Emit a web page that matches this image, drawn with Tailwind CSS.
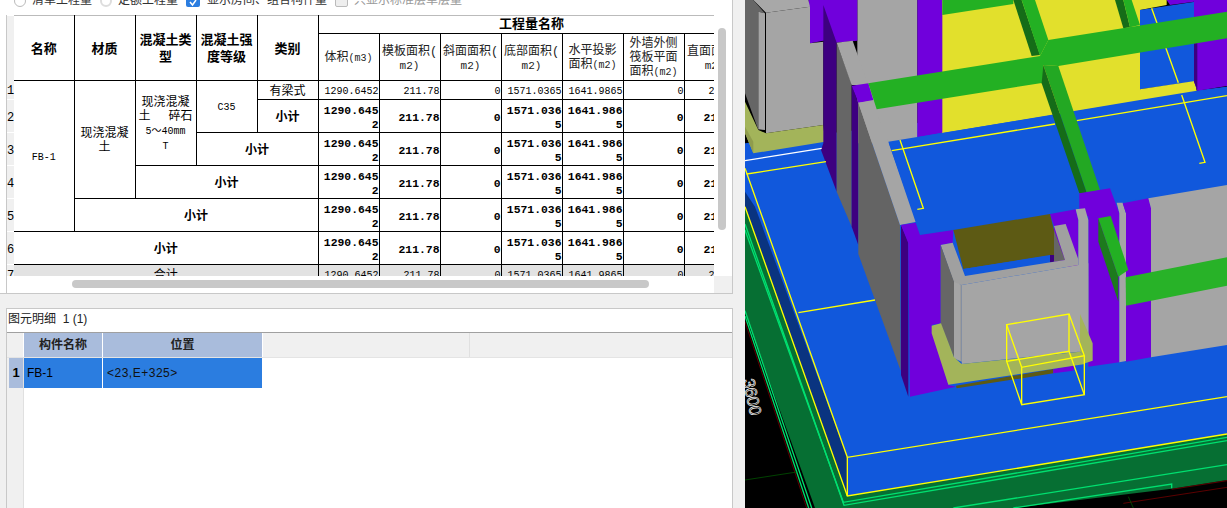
<!DOCTYPE html>
<html lang="zh-CN">
<head>
    <meta charset="UTF-8">
    <title>工程量</title>
    <script src="https://cdn.jsdelivr.net/npm/@tailwindcss/browser@4"></script>
</head>
<body class="bg-[#f0f0f0]">
    <div class="flex w-[1227px] h-[508px] overflow-hidden font-['Liberation_Sans','Noto_Sans_CJK_SC',sans-serif] text-xs text-black">
        <!-- left column: quantity table and detail grid -->
        <div class="w-[745px] shrink-0 flex flex-col">
            <div class="w-[733px] h-[294px] shrink-0 bg-white border-r border-b border-[#c8c8c8] flex flex-col overflow-hidden">
                <div class="h-[15px] shrink-0 flex items-end pb-[8px] text-[12px] leading-[14px] text-[#333]">
                    <span class="ml-[14px] w-[12px] h-[12px] rounded-full border border-[#bbb] bg-white shrink-0"></span>
                    <span class="ml-[6px] shrink-0">清单工程量</span>
                    <span class="ml-[8px] w-[12px] h-[12px] rounded-full border-2 border-[#ddd] bg-white shrink-0"></span>
                    <span class="ml-[6px] shrink-0">定额工程量</span>
                    <span class="ml-[8px] w-[14px] h-[13px] rounded-[2px] bg-[#2b7de0] shrink-0 flex items-end justify-center">
                        <svg width="8" height="8" viewBox="0 0 8 8" fill="none" stroke="#fff" stroke-width="1.5"><path d="M1 3l2.5 3L7 1"/></svg>
                    </span>
                    <span class="ml-[7px] shrink-0">显示房间、组合构件量</span>
                    <span class="ml-[8px] w-[13px] h-[13px] rounded-[2px] border border-[#bbb] bg-[#eee] shrink-0"></span>
                    <span class="ml-[6px] shrink-0 text-[#999]">只显示标准层单层量</span>
                </div>
                <div class="flex h-[261px] shrink-0">
                    <div class="w-[7px] shrink-0 border-r border-[#c8c8c8]"></div>
                    <div class="w-[707px] shrink-0 overflow-hidden">
                        <table class="table-fixed border-collapse w-[738px] font-['Liberation_Mono','Noto_Sans_CJK_SC',monospace] text-[10px] leading-[14px] [&_td]:border [&_td]:border-black [&_td]:p-0">
                            <colgroup>
                                <col class="w-[7px]"><col class="w-[60px]"><col class="w-[61px]"><col class="w-[61px]"><col class="w-[61px]"><col class="w-[61px]"><col class="w-[61px]"><col class="w-[61px]"><col class="w-[61px]"><col class="w-[61px]"><col class="w-[61px]"><col class="w-[61px]"><col class="w-[61px]">
                            </colgroup>
                            <tr class="h-[18px]">
                                <th rowspan="2" class="bg-[#f0f0f0]"></th>
                                <td rowspan="2" class="border-t-[#bbb]! border-l-0! text-center font-bold text-[13px] leading-[17px] pt-[2px]!">名称</td>
                                <td rowspan="2" class="border-t-[#bbb]! text-center font-bold text-[13px] leading-[17px] pt-[2px]!">材质</td>
                                <td rowspan="2" class="border-t-[#bbb]! text-center font-bold text-[13px] leading-[17px] pt-[2px]!">混凝土类<br>型</td>
                                <td rowspan="2" class="border-t-[#bbb]! text-center font-bold text-[13px] leading-[17px] pt-[2px]!">混凝土强<br>度等级</td>
                                <td rowspan="2" class="border-t-[#bbb]! text-center font-bold text-[13px] leading-[17px] pt-[2px]!">类别</td>
                                <td colspan="7" class="border-t-[#bbb]! text-center font-bold text-[13px] pt-[1px]!">工程量名称</td>
                            </tr>
                            <tr class="h-[47px] text-center text-[12px] text-[#222] [&>td]:pt-[3px]!">
                                <td>体积<span class="text-[10px]">(m3)</span></td>
                                <td>模板面积(<br><span class="text-[11px]">m2)</span></td>
                                <td>斜面面积(<br><span class="text-[11px]">m2)</span></td>
                                <td>底部面积(<br><span class="text-[11px]">m2)</span></td>
                                <td>水平投影<br>面积<span class="text-[10px]">(m2)</span></td>
                                <td>外墙外侧<br>筏板平面<br>面积<span class="text-[10px]">(m2)</span></td>
                                <td>直面面积(<br><span class="text-[11px]">m2)</span></td>
                            </tr>
                            <tr class="h-[19px] text-right [&>td]:pt-[3px]!">
                                <th class="bg-[#f0f0f0] font-normal text-[12px] text-left border-b border-white pt-[3px]">1</th>
                                <td rowspan="5" class="border-l-0! text-center">FB-1</td>
                                <td rowspan="4" class="text-center text-[12px]">现浇混凝<br>土</td>
                                <td rowspan="3" class="text-center text-[12px]">现浇混凝<br><span class="flex justify-between px-[3px]"><span>土</span><span>碎石</span></span><span class="text-[10px]">5～40mm</span><br><span class="text-[10px]">T</span></td>
                                <td rowspan="2" class="text-center">C35</td>
                                <td class="text-center text-[12px]">有梁式</td>
                                <td class="pr-[1px]">1290.6452</td><td class="pr-[2px]">211.78</td><td class="pr-[2px]">0</td><td class="pr-[1px]">1571.0365</td><td class="pr-[1px]">1641.9865</td><td class="pr-[2px]">0</td><td class="pr-[2px]">211.78</td>
                            </tr>
                            <tr class="h-[33px] text-right font-bold text-[11.4px] break-all [&>td]:pt-[4px]!">
                                <th class="bg-[#f0f0f0] font-normal text-[12px] text-left border-b border-white pt-[3px]">2</th>
                                <td class="text-center text-[12px]">小计</td>
                                <td class="pr-[1px]">1290.6452</td><td class="pr-[2px]">211.78</td><td class="pr-[2px]">0</td><td class="pr-[1px]">1571.0365</td><td class="pr-[1px]">1641.9865</td><td class="pr-[2px]">0</td><td class="pr-[2px]">211.78</td>
                            </tr>
                            <tr class="h-[33px] text-right font-bold text-[11.4px] break-all [&>td]:pt-[4px]!">
                                <th class="bg-[#f0f0f0] font-normal text-[12px] text-left border-b border-white pt-[3px]">3</th>
                                <td colspan="2" class="text-center text-[12px]">小计</td>
                                <td class="pr-[1px]">1290.6452</td><td class="pr-[2px]">211.78</td><td class="pr-[2px]">0</td><td class="pr-[1px]">1571.0365</td><td class="pr-[1px]">1641.9865</td><td class="pr-[2px]">0</td><td class="pr-[2px]">211.78</td>
                            </tr>
                            <tr class="h-[33px] text-right font-bold text-[11.4px] break-all [&>td]:pt-[4px]!">
                                <th class="bg-[#f0f0f0] font-normal text-[12px] text-left border-b border-white pt-[3px]">4</th>
                                <td colspan="3" class="text-center text-[12px]">小计</td>
                                <td class="pr-[1px]">1290.6452</td><td class="pr-[2px]">211.78</td><td class="pr-[2px]">0</td><td class="pr-[1px]">1571.0365</td><td class="pr-[1px]">1641.9865</td><td class="pr-[2px]">0</td><td class="pr-[2px]">211.78</td>
                            </tr>
                            <tr class="h-[33px] text-right font-bold text-[11.4px] break-all [&>td]:pt-[4px]!">
                                <th class="bg-[#f0f0f0] font-normal text-[12px] text-left border-b border-white pt-[3px]">5</th>
                                <td colspan="4" class="text-center text-[12px]">小计</td>
                                <td class="pr-[1px]">1290.6452</td><td class="pr-[2px]">211.78</td><td class="pr-[2px]">0</td><td class="pr-[1px]">1571.0365</td><td class="pr-[1px]">1641.9865</td><td class="pr-[2px]">0</td><td class="pr-[2px]">211.78</td>
                            </tr>
                            <tr class="h-[33px] text-right font-bold text-[11.4px] break-all [&>td]:pt-[4px]!">
                                <th class="bg-[#f0f0f0] font-normal text-[12px] text-left border-b border-white pt-[3px]">6</th>
                                <td colspan="5" class="border-l-0! text-center text-[12px]">小计</td>
                                <td class="pr-[1px]">1290.6452</td><td class="pr-[2px]">211.78</td><td class="pr-[2px]">0</td><td class="pr-[1px]">1571.0365</td><td class="pr-[1px]">1641.9865</td><td class="pr-[2px]">0</td><td class="pr-[2px]">211.78</td>
                            </tr>
                            <tr class="h-[19px] text-right bg-[#e2e2e2] [&>td]:pt-[3px]!">
                                <th class="bg-[#f0f0f0] font-normal text-[12px] text-left pt-[3px]">7</th>
                                <td colspan="5" class="border-l-0! text-center text-[12px]">合计</td>
                                <td class="pr-[1px]">1290.6452</td><td class="pr-[2px]">211.78</td><td class="pr-[2px]">0</td><td class="pr-[1px]">1571.0365</td><td class="pr-[1px]">1641.9865</td><td class="pr-[2px]">0</td><td class="pr-[2px]">211.78</td>
                            </tr>
                        </table>
                    </div>
                    <div class="flex-1">
                        <div class="ml-[4px] mt-[13px] w-[8px] h-[202px] rounded-full bg-[#c8c8c8]"></div>
                    </div>
                </div>
                <div class="flex flex-1">
                    <div class="w-[7px] shrink-0 border-r border-[#c8c8c8]"></div>
                    <div class="w-[707px] shrink-0 pl-[65px] pt-[4px]">
                        <div class="w-[577px] h-[8px] rounded-full bg-[#c8c8c8]"></div>
                    </div>
                    <div class="flex-1 bg-[#f0f0f0]"></div>
                </div>
            </div>
            <!-- detail grid -->
            <div class="mt-[14px] ml-[6px] w-[727px] flex-1 bg-white border-t border-l border-r border-[#c8c8c8] flex flex-col min-h-0">
                <div class="h-[23px] shrink-0 flex items-center pl-[1px] pb-[3px] text-[12px] text-[#222] whitespace-pre">图元明细  1 (1)</div>
                <div class="flex-1 border-t border-[#a0a0a0] flex flex-col min-h-0">
                    <div class="h-[25px] shrink-0 flex bg-[#f0f0f0] border-b border-[#e4e4e4] font-bold text-[#222]">
                        <div class="w-[17px] shrink-0 border-r border-white"></div>
                        <div class="w-[79px] shrink-0 bg-[#a9bcdc] border-r border-white flex items-center justify-center">构件名称</div>
                        <div class="w-[160px] shrink-0 bg-[#a9bcdc] border-r border-white flex items-center justify-center">位置</div>
                        <div class="w-[207px] shrink-0 border-r border-[#e0e0e0]"></div>
                    </div>
                    <div class="flex flex-1 min-h-0">
                        <div class="w-[17px] shrink-0 bg-[#f0f0f0] border-r border-[#e0e0e0]">
                            <div class="h-[30px] ml-[2px] bg-[#a9bcdc] flex items-center justify-center font-bold text-[13px]">1</div>
                        </div>
                        <div class="w-[79px] h-[30px] shrink-0 bg-[#2b7de0] border-r border-white flex items-center pl-[3px]">FB-1</div>
                        <div class="w-[160px] h-[30px] shrink-0 bg-[#2b7de0] border-r border-white flex items-center pl-[4px] text-[#111] tracking-[0.5px]">&lt;23,E+325&gt;</div>
                    </div>
                </div>
            </div>
        </div>
        <!-- 3D model view, drawn in a 3x coordinate space -->
        <div class="w-[482px] h-[508px] shrink-0 bg-black">
            <svg class="block" width="482" height="508" viewBox="15 0 1446 1524" stroke-linejoin="miter">
                <!-- ground slab -->
                <polygon points="15,620 15,940 225,1524 820,1524 1295,1466 1461,1440 1461,1250 322,1400" fill="#066f33"/>
                <polygon points="15,430 1461,260 1461,1302 322,1488 15,620" fill="#1158dc"/>
                <polygon points="15,575 45,620 322,1372 322,1488 15,620" fill="#0a3480"/>
                <g fill="none" stroke="#00e070" stroke-width="4">
                    <polyline points="15,690 310,1507 1461,1312"/>
                    <polyline points="15,672 312,1516 1461,1322"/>
                    <polyline points="15,932 215,1524"/>
                    <polyline points="15,948 206,1524"/>
                    <polyline points="640,1524 1461,1394"/>
                    <polyline points="820,1524 1295,1452 1295,1465"/>
                </g>
                <g fill="none" stroke-width="2">
                    <polyline points="15,965 200,1524" stroke="#8a0000"/>
                    <polyline points="1295,1468 1461,1442" stroke="#8a0000"/>
                    <polyline points="1150,1510 1461,1462" stroke="#8a0000"/>
                    <polyline points="15,1440 170,1416" stroke="#006400"/>
                    <polyline points="1165,1490 1180,1524" stroke="#006400"/>
                </g>
                <text transform="translate(8,1140) rotate(78)" font-family="Liberation Sans" font-size="50" fill="none" stroke="#fff" stroke-width="2">3600</text>
                <!-- back floor and walls -->
                <polygon points="605,0 1280,0 1280,15 1200,30 1200,300 605,400" fill="#e2e02c"/>
                <polygon points="1200,30 1365,5 1365,245 1200,268" fill="#1158dc"/>
                <polygon points="1200,268 1365,243 1370,272 1200,300" fill="#e2e02c"/>
                <polygon points="1280,0 1461,0 1461,258 1372,272 1362,245 1362,5 1290,15" fill="#7000dc"/>
                <polygon points="1362,130 1372,130 1372,270 1362,245" fill="#3d0080"/>
                <polygon points="352,0 532,0 532,430 352,430" fill="#a5a5a5"/>
                <polygon points="532,0 607,0 607,398 532,412" fill="#7000dc"/>
                <polygon points="607,0 820,0 820,12 607,45" fill="#23b023"/>
                <!-- left block -->
                <polygon points="205,0 352,0 352,122 290,128 250,122 210,130" fill="#7000dc"/>
                <polygon points="40,0 205,0 210,20 78,38" fill="#a8a8a8"/>
                <polygon points="78,38 210,20 210,130 250,125 250,375 78,400" fill="#a5a5a5"/>
                <polygon points="15,0 40,0 75,40 55,35 55,390 15,280" fill="#666666"/>
                <polygon points="55,35 75,40 75,390 55,388" fill="#a5a5a5"/>
                <polygon points="15,305 55,390 78,400 250,375 255,425 40,460 15,400" fill="#a3b45a"/>
                <polygon points="15,380 40,425 40,460 15,400" fill="#8f9c4d"/>
                <polygon points="250,15 290,128 290,575 243,450 250,430" fill="#3d0080"/>
                <!-- diagonal wall -->
                <polygon points="290,128 335,250 335,680 290,575" fill="#666666"/>
                <polygon points="290,128 338,122 385,255 335,255" fill="#a5a5a5"/>
                <polygon points="335,255 355,310 355,735 335,680" fill="#3d0080"/>
                <polygon points="335,257 385,250 400,300 355,308" fill="#7000dc"/>
                <polygon points="355,308 480,675 482,1112 355,762" fill="#646464"/>
                <polygon points="355,308 395,303 445,425 530,665 480,675" fill="#a5a5a5"/>
                <!-- upper blue band -->
                <polygon points="445,425 1461,260 1461,555 1230,595 1120,608 1110,565 1018,580 1018,630 540,705" fill="#1158dc"/>
                <g fill="none" stroke="#ffff00" stroke-width="4">
                    <polyline points="455,452 945,372"/>
                    <polyline points="1010,362 1461,287"/>
                    <polyline points="20,522 258,485"/>
                    <polyline points="480,420 550,625 532,628"/>
                    <polyline points="1235,25 1315,248"/>
                    <polyline points="1325,285 1395,487 1378,490"/>
                    <polyline points="15,505 322,1372 1461,1190"/>
                    <polyline points="15,620 322,1488 1461,1302"/>
                    <polyline points="322,1372 322,1488"/>
                    <polyline points="175,938 405,900"/>
                </g>
                <polyline points="15,482 245,445" fill="none" stroke="#ffffff" stroke-width="4"/>
                <!-- beams -->
                <polygon points="820,0 845,0 900,165 875,168" fill="#156c18"/>
                <polygon points="845,0 885,0 925,120 900,168" fill="#23b023"/>
                <polygon points="1125,0 1150,0 1170,82 1150,85" fill="#156c18"/>
                <polygon points="1150,0 1175,0 1200,75 1170,82" fill="#23b023"/>
                <polygon points="385,250 900,168 925,120 1461,35 1461,115 955,198 910,195 910,248 410,328" fill="#23b023"/>
                <polygon points="910,195 955,198 1080,570 1040,578" fill="#23a823"/>
                <polygon points="910,195 1040,578 1018,580 905,250" fill="#156c18"/>
                <!-- front room -->
                <polygon points="1018,580 1110,565 1138,640 1138,1087 1045,1100 1045,650 1018,630" fill="#7000dc"/>
                <polygon points="483,675 505,725 505,1190 483,1125" fill="#3d0080"/>
                <polygon points="483,675 527,668 540,705 640,690 638,728 602,735 602,970 575,975 625,1155 648,1160 510,1190 505,730" fill="#7000dc"/>
                <polygon points="930,642 1007,628 1015,660 1015,800 942,800 942,678" fill="#7000dc"/>
                <polygon points="640,690 930,642 942,690 942,765 670,807" fill="#5d5a14"/>
                <polygon points="670,807 930,765 930,785 675,828" fill="#1158dc"/>
                <polygon points="930,765 942,765 942,785 930,787" fill="#3d0080"/>
                <polygon points="942,690 942,785 975,780" fill="#666666"/>
                <polygon points="602,735 638,728 675,828 975,780 942,678 977,672 1015,778 1015,795 665,855 642,850" fill="#a0a0a0"/>
                <polygon points="1007,628 1035,625 1045,660 1045,1052 1015,1055 1015,660" fill="#a5a5a5"/>
                <polygon points="665,855 1015,795 1045,790 1045,1052 665,1092" fill="#a5a5a5"/>
                <polygon points="602,735 642,845 642,1072 602,972" fill="#666666"/>
                <polygon points="642,845 665,855 665,1085 642,1075" fill="#a5a5a5"/>
                <polyline points="663,855 663,1085" fill="none" stroke="#888" stroke-width="2"/>
                <polygon points="648,1157 940,1107 940,1120 650,1165" fill="#5d5a14"/>
                <polygon points="940,1107 1005,1096 1000,1112 940,1120" fill="#7000dc"/>
                <polygon points="575,977 603,970 642,1072 665,1092 1020,1055 1035,1068 1035,1092 625,1154 575,1000" fill="#a3b45a"/>
                <polygon points="1020,942 1058,1030 1058,1082 1035,1090 1035,1068 1020,1055" fill="#a3b45a"/>
                <!-- right of the room -->
                <polygon points="1130,608 1148,608 1158,640 1158,1083 1138,1087 1138,640" fill="#a5a5a5"/>
                <polygon points="1148,610 1225,595 1233,622 1233,1072 1158,1085 1158,640" fill="#7000dc"/>
                <polygon points="1225,595 1461,555 1461,1035 1233,1072 1233,625" fill="#a5a5a5"/>
                <polygon points="1075,655 1135,830 1135,905 1075,725" fill="#1d7a1d"/>
                <polygon points="1075,655 1112,648 1165,810 1135,830" fill="#23b023"/>
                <polygon points="1157,832 1461,772 1461,857 1158,917" fill="#28b228"/>
                <!-- selection box -->
                <g fill="none" stroke="#ffff00" stroke-width="4">
                    <polygon points="800,974 987,942 1033,1067 845,1102"/>
                    <polygon points="800,1084 987,1054 1033,1184 845,1214"/>
                    <polyline points="800,974 800,1084"/>
                    <polyline points="987,942 987,1054"/>
                    <polyline points="1033,1067 1033,1184"/>
                    <polyline points="845,1102 845,1214"/>
                </g>
            </svg>
        </div>
    </div>
</body>
</html>
